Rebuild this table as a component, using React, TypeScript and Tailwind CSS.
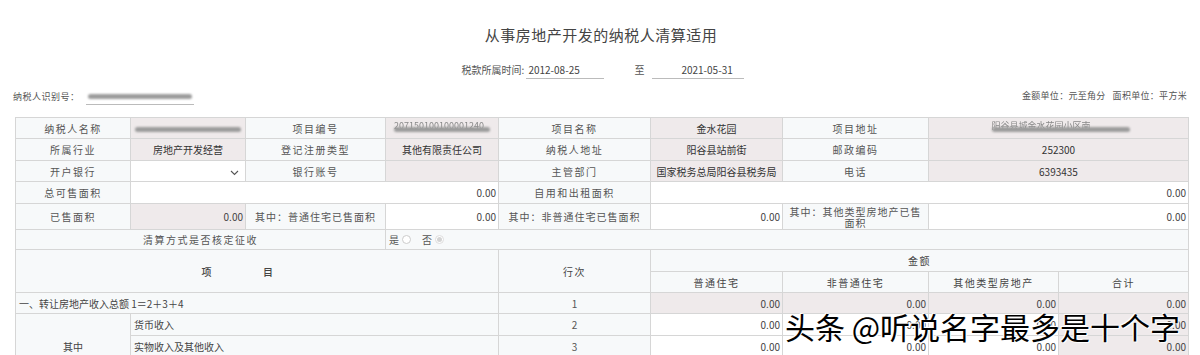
import React from "react";

const F = "font-['Noto_Sans_CJK_SC','Noto_Sans',sans-serif]";
const B = "border border-[#d6d6d6] leading-[13px] p-0";
const L = `${B} bg-[#f7f9fa] text-[#555] text-[10px] tracking-[1.5px] text-center px-[2px]`;
const P = `${B} bg-[#efeaeb] text-[#333] text-[10px] text-center px-[3px]`;
const PR = `${B} bg-[#efeaeb] text-[#444] text-[10px] text-right px-[2px]`;
const WR = `${B} bg-white text-[#444] text-[10px] text-right px-[2px]`;
const H = `${B} bg-[#f7f9fa] text-[#444] text-[10px] tracking-[1.5px] text-center`;

function Blur({ w, text }: { w: number; text?: string }) {
  return (
    <span className="relative inline-block align-middle" style={{ width: w }}>
      {text && (
        <span className="absolute left-0 right-0 -top-[6px] text-left text-[9px] leading-[10px] text-[#888] blur-[0.5px] whitespace-nowrap overflow-hidden">
          {text}
        </span>
      )}
      <span className="block h-[5px] w-full rounded-full bg-[#9c9c9c] blur-[1px]" />
    </span>
  );
}

export default function App() {
  return (
    <div className={`${F} relative w-[1200px] h-[355px] overflow-hidden bg-white text-[#333]`}>
      <div className="h-[54px] flex items-end justify-center pb-[12px]">
        <h1 className="text-[15px] tracking-[0.5px] text-[#444] leading-none ml-[2px]">
          从事房地产开发的纳税人清算适用
        </h1>
      </div>
      <div className="h-[30px] flex items-center justify-center text-[10px] text-[#555] pl-[6px]">
        <span>税款所属时间:</span>
        <span className="ml-[2px] w-[78px] border-b border-[#bbb] text-[#444] text-[10px] pb-[1px] pt-[3px] pl-[2px]">2012-08-25</span>
        <span className="ml-[30px] mr-[8px]">至</span>
        <span className="w-[92px] border-b border-[#bbb] text-[#444] pb-[1px] pt-[3px] pl-[29px]">2021-05-31</span>
      </div>
      <div className="h-[33px] flex items-start justify-between px-[13px] pt-[4px] text-[9px] text-[#555]">
        <div className="flex items-center">
          <span className="tracking-[0.5px]">纳税人识别号：</span>
          <span className="ml-[6px] w-[108px] border-b border-[#bbb] h-[17px] flex items-center justify-center">
            <Blur w={104} />
          </span>
        </div>
        <div className="tracking-[0.3px] pt-[1px]">金额单位：元至角分&nbsp;&nbsp;&nbsp;面积单位：平方米</div>
      </div>
      <table className="ml-[15px] w-[1173px] table-fixed border-collapse">
        <colgroup>
          <col className="w-[115px]" />
          <col className="w-[115px]" />
          <col className="w-[140px]" />
          <col className="w-[113px]" />
          <col className="w-[152px]" />
          <col className="w-[132px]" />
          <col className="w-[146px]" />
          <col className="w-[130px]" />
          <col className="w-[130px]" />
        </colgroup>
        <tbody>
          <tr className="h-[21px]">
            <td className={L}>纳税人名称</td>
            <td className={P}><Blur w={106} /></td>
            <td className={L}>项目编号</td>
            <td className={P}><Blur w={96} text="207150100100001240" /></td>
            <td className={L}>项目名称</td>
            <td className={P}>金水花园</td>
            <td className={L}>项目地址</td>
            <td className={P} colSpan={2}>
              <span className="ml-[4px]"><Blur w={138} text="阳谷县城金水花园小区南" /></span>
            </td>
          </tr>
          <tr className="h-[22px]">
            <td className={L}>所属行业</td>
            <td className={P}>房地产开发经营</td>
            <td className={L}>登记注册类型</td>
            <td className={P}>其他有限责任公司</td>
            <td className={L}>纳税人地址</td>
            <td className={P}>阳谷县站前街</td>
            <td className={L}>邮政编码</td>
            <td className={P} colSpan={2}>252300</td>
          </tr>
          <tr className="h-[21px]">
            <td className={L}>开户银行</td>
            <td className={`${B} bg-white text-right pr-[6px]`}>
              <svg width="9" height="6" viewBox="0 0 9 6" className="inline-block">
                <path d="M1 1l3.5 3.5L8 1" fill="none" stroke="#555" strokeWidth="1.1" />
              </svg>
            </td>
            <td className={L}>银行账号</td>
            <td className={P}></td>
            <td className={L}>主管部门</td>
            <td className={`${P} text-[9.5px] whitespace-nowrap`}>国家税务总局阳谷县税务局</td>
            <td className={L}>电话</td>
            <td className={P} colSpan={2}>6393435</td>
          </tr>
          <tr className="h-[22px]">
            <td className={L}>总可售面积</td>
            <td className={WR} colSpan={3}>0.00</td>
            <td className={L}>自用和出租面积</td>
            <td className={WR} colSpan={4}>0.00</td>
          </tr>
          <tr className="h-[26px]">
            <td className={L}>已售面积</td>
            <td className={PR}>0.00</td>
            <td className={`${L} whitespace-nowrap tracking-[1px]`}>其中：普通住宅已售面积</td>
            <td className={WR}>0.00</td>
            <td className={`${L} whitespace-nowrap tracking-[1px]`}>其中：非普通住宅已售面积</td>
            <td className={WR}>0.00</td>
            <td className={`${L} tracking-[1px] px-[6px] !leading-[11px]`}>其中：其他类型房地产已售面积</td>
            <td className={WR} colSpan={2}>0.00</td>
          </tr>
          <tr className="h-[20px]">
            <td className={L} colSpan={3}>清算方式是否核定征收</td>
            <td className={`${B} bg-[#f7f9fa] text-[10px] text-[#555] px-[3px]`} colSpan={6}>
              <span className="inline-flex items-center">
                是
                <span className="ml-[3px] inline-block w-[9px] h-[9px] rounded-full border border-[#ccc] bg-white" />
                <span className="ml-[11px]">否</span>
                <span className="ml-[3px] inline-flex items-center justify-center w-[9px] h-[9px] rounded-full border border-[#ddd] bg-white">
                  <span className="w-[5px] h-[5px] rounded-full bg-[#d4d4d4]" />
                </span>
              </span>
            </td>
          </tr>
          <tr className="h-[22px]">
            <td className={`${H} text-[#333] font-medium pr-[38px]`} colSpan={4} rowSpan={2}>
              <span className="inline-block">项</span>
              <span className="inline-block ml-[50px]">目</span>
            </td>
            <td className={H} rowSpan={2}>行次</td>
            <td className={`${H} text-[#333]`} colSpan={4}>金额</td>
          </tr>
          <tr className="h-[21px]">
            <td className={`${H} text-[#333]`}>普通住宅</td>
            <td className={`${H} text-[#333]`}>非普通住宅</td>
            <td className={`${H} text-[#333]`}>其他类型房地产</td>
            <td className={`${H} text-[#333]`}>合计</td>
          </tr>
          <tr className="h-[21px]">
            <td className={`${B} bg-[#f7f9fa] text-[10px] text-[#444] text-left px-[3px]`} colSpan={4}>
              一、转让房地产收入总额 1＝2＋3＋4
            </td>
            <td className={`${B} bg-[#f7f9fa] text-[10px] text-[#555] text-center`}>1</td>
            <td className={PR}>0.00</td>
            <td className={PR}>0.00</td>
            <td className={PR}>0.00</td>
            <td className={PR}>0.00</td>
          </tr>
          <tr className="h-[22px]">
            <td className={`${B} bg-[#f7f9fa] text-[10px] text-[#444] text-center`} rowSpan={3}>其中</td>
            <td className={`${B} bg-[#f7f9fa] text-[10px] text-[#444] text-left px-[3px]`} colSpan={3}>货币收入</td>
            <td className={`${B} bg-[#f7f9fa] text-[10px] text-[#555] text-center`}>2</td>
            <td className={WR}>0.00</td>
            <td className={WR}>0.00</td>
            <td className={WR}>0.00</td>
            <td className={PR}>0.00</td>
          </tr>
          <tr className="h-[22px]">
            <td className={`${B} bg-[#f7f9fa] text-[10px] text-[#444] text-left px-[3px]`} colSpan={3}>实物收入及其他收入</td>
            <td className={`${B} bg-[#f7f9fa] text-[10px] text-[#555] text-center`}>3</td>
            <td className={WR}>0.00</td>
            <td className={WR}>0.00</td>
            <td className={WR}>0.00</td>
            <td className={PR}>0.00</td>
          </tr>
          <tr className="h-[22px]">
            <td className={`${B} bg-[#f7f9fa] text-[10px] text-[#444] text-left px-[3px]`} colSpan={3}>视同销售收入</td>
            <td className={`${B} bg-[#f7f9fa] text-[10px] text-[#555] text-center`}>4</td>
            <td className={WR}>0.00</td>
            <td className={WR}>0.00</td>
            <td className={WR}>0.00</td>
            <td className={PR}>0.00</td>
          </tr>
        </tbody>
      </table>
      <div className="absolute left-[785px] top-[306px] text-[30px] leading-[40px] text-black whitespace-nowrap [text-shadow:0_0_2px_#fff,0_0_2px_#fff,1px_1px_0_#fff,-1px_-1px_0_#fff]">
        头条 @听说名字最多是十个字
      </div>
    </div>
  );
}
